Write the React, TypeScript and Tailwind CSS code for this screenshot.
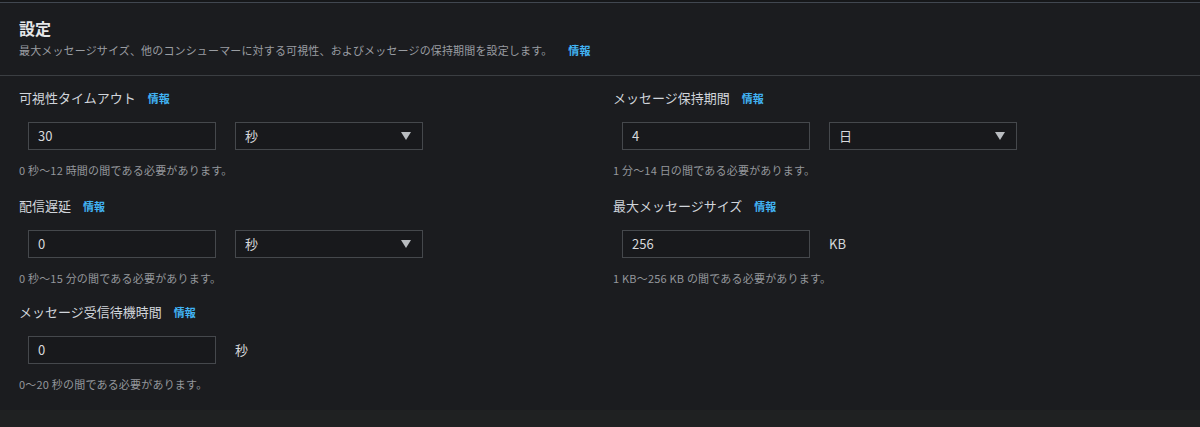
import React from "react";

const font = { fontFamily: '"Noto Sans CJK JP", "Noto Sans", sans-serif' };

function Info() {
  return <span className="ml-3 text-[11px] font-bold text-[#42b4f5]">情報</span>;
}

function Caret() {
  return (
    <svg width="10" height="8" viewBox="0 0 10 8" className="shrink-0">
      <path d="M0 0 H10 L5 8 Z" fill="#b9bcc0" />
    </svg>
  );
}

function Field({
  label,
  value,
  unit,
  select,
  help,
  gapTop,
}: {
  label: string;
  value: string;
  unit: string;
  select?: boolean;
  help: string;
  gapTop: string;
}) {
  return (
    <div className={`flex flex-col ${gapTop}`}>
      <div className="flex items-center h-5 text-[13px] text-[#d1d5db]">
        {label}
        <Info />
      </div>
      <div className="flex items-center gap-[19px] ml-[9px] mt-[14px]">
        <div className="w-[188px] h-7 border border-[#45484c] bg-[#18191c] flex items-center pl-[9px] text-[13px] text-[#d6d8db]">
          {value}
        </div>
        {select ? (
          <div className="w-[188px] h-7 border border-[#45484c] bg-[#18191c] flex items-center justify-between pl-[9px] pr-[11px] text-[13px] text-[#d6d8db]">
            <span>{unit}</span>
            <Caret />
          </div>
        ) : (
          <span className="text-[13px] text-[#d6d8db]">{unit}</span>
        )}
      </div>
      <div className="mt-3 h-4 flex items-center text-[11px] tracking-[0.2px] text-[#94979c]">{help}</div>
    </div>
  );
}

export default function App() {
  return (
    <div className="w-[1200px] h-[427px] bg-[#1f2122] overflow-hidden" style={font}>
      <div className="h-[2px] bg-[#161719]" />
      <div className="bg-[#1b1c1f] border-t border-[#414750] h-[408px]">
        <div className="px-[19px] pt-[14px] pb-[17px] border-b border-[#3b3e42]">
          <h2 className="text-[16px] leading-[22px] font-bold text-[#e4e6e8]">設定</h2>
          <p className="text-[11px] leading-4 tracking-[0.15px] text-[#9a9da2] mt-[3px] flex items-center">
            最大メッセージサイズ、他のコンシューマーに対する可視性、およびメッセージの保持期間を設定します。
            <span className="ml-[16px] font-bold text-[#42b4f5]">情報</span>
          </p>
        </div>
        <div className="grid grid-cols-2 gap-x-[26px] px-[19px] pt-[12px]">
          <div className="flex flex-col">
            <Field
              label="可視性タイムアウト"
              value="30"
              unit="秒"
              select
              help="0 秒～12 時間の間である必要があります。"
              gapTop=""
            />
            <Field
              label="配信遅延"
              value="0"
              unit="秒"
              select
              help="0 秒～15 分の間である必要があります。"
              gapTop="mt-[18px]"
            />
            <Field
              label="メッセージ受信待機時間"
              value="0"
              unit="秒"
              help="0～20 秒の間である必要があります。"
              gapTop="mt-[16px]"
            />
          </div>
          <div className="flex flex-col">
            <Field
              label="メッセージ保持期間"
              value="4"
              unit="日"
              select
              help="1 分～14 日の間である必要があります。"
              gapTop=""
            />
            <Field
              label="最大メッセージサイズ"
              value="256"
              unit="KB"
              help="1 KB～256 KB の間である必要があります。"
              gapTop="mt-[18px]"
            />
          </div>
        </div>
      </div>
    </div>
  );
}
